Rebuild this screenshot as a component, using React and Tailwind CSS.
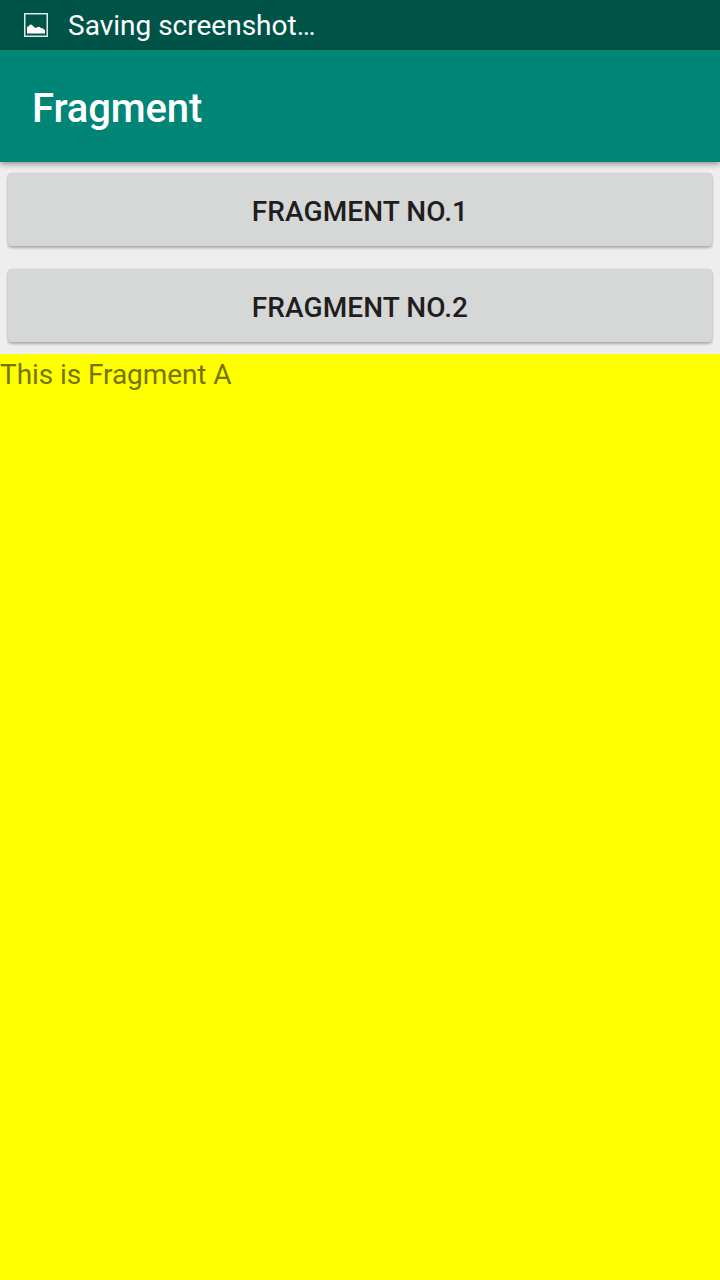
function Button({ children }) {
  return (
    <div className="h-24 px-2 pt-[11px] pb-3">
      <button className="flex h-[73px] w-full items-center justify-center rounded-[4px] bg-[#d6d7d7] pt-1 text-[28px] leading-8 font-medium tracking-[0.1px] text-[#1e1e1e] shadow-[0_2px_3px_rgba(0,0,0,0.28),0_0_2px_rgba(0,0,0,0.12)]">
        {children}
      </button>
    </div>
  );
}

export default function App() {
  return (
    <div className="flex h-[1280px] w-[720px] flex-col overflow-hidden bg-[#eeeeee] font-['Roboto',sans-serif]">
      <div className="flex h-[50px] shrink-0 items-center bg-[#005447] pl-6 text-white">
        <svg className="mr-5 size-6" viewBox="0 0 24 24" fill="none">
          <rect x="0.75" y="0.75" width="22.5" height="22.5" stroke="#dce8e6" strokeWidth="1.5" />
          <path d="M3 20.5v-6.2l3.2-2.6q1-.7 1.8.2l3.4 3.2 3-1.3q1-.4 1.6.4l.8.8 2 .2 2.2 2v3.3z" fill="white" />
        </svg>
        <span className="pt-0.5 text-[28px] leading-8">Saving screenshot…</span>
      </div>
      <header className="relative flex h-28 shrink-0 items-center bg-[#008577] pt-1.5 pl-8 shadow-[0_2px_6px_rgba(0,0,0,0.4)]">
        <h1 className="text-[40px] leading-[48px] font-medium tracking-[-0.12px] text-white">Fragment</h1>
      </header>
      <Button>FRAGMENT NO.1</Button>
      <Button>FRAGMENT NO.2</Button>
      <main className="flex-1 bg-[#ffff00] pt-[5px]">
        <p className="text-[28px] leading-8 tracking-[-0.07px] text-[#757500]">This is Fragment A</p>
      </main>
    </div>
  );
}
